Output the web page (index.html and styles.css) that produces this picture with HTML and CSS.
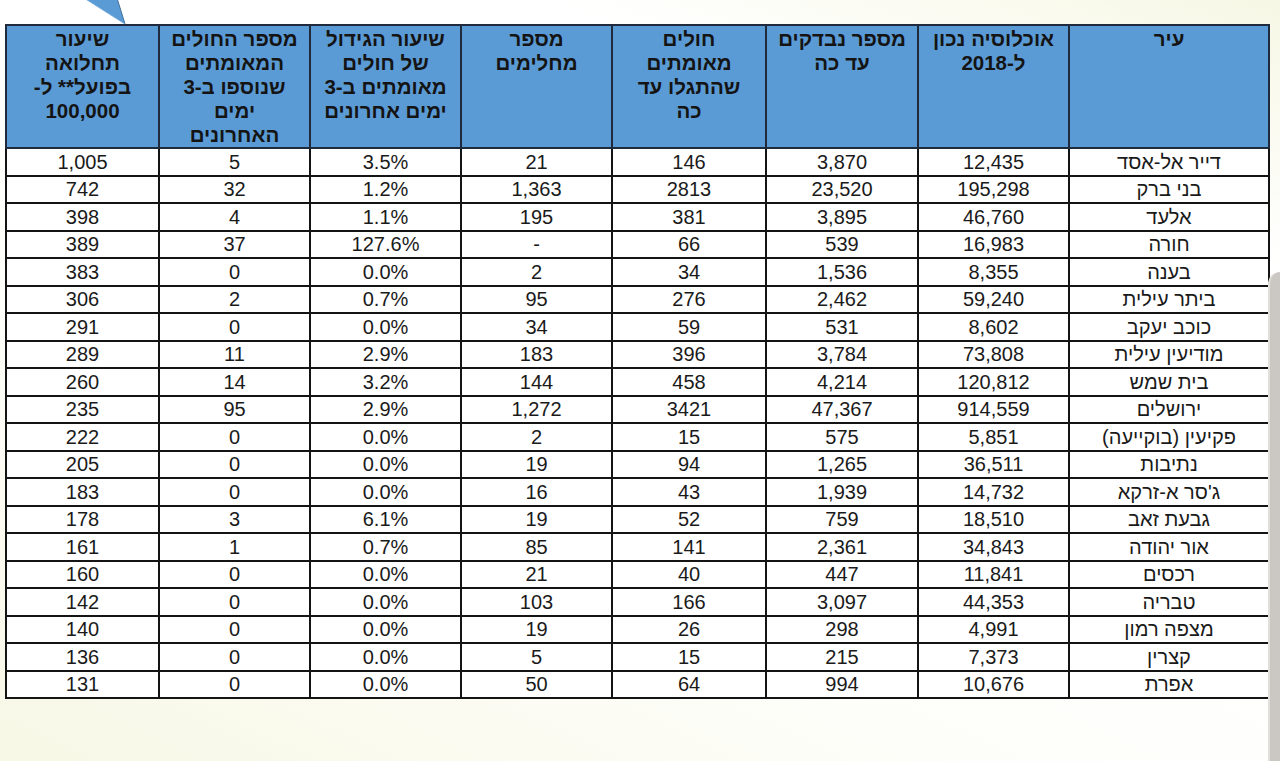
FILE: index.html
```html
<!DOCTYPE html>
<html lang="he">
<head>
<meta charset="utf-8">
<title>שיעור תחלואה</title>
<link rel="stylesheet" href="styles.css">
</head>
<body>
<div class="slide">
  <svg class="callout-tail" width="70" height="30" viewBox="0 0 70 30" aria-hidden="true">
    <polygon points="24,-2 57,-2 65,24" fill="#5b9bd5"/>
    <line x1="57" y1="-2" x2="65" y2="24" stroke="#41719c" stroke-width="1"/>
    <line x1="24" y1="-2" x2="65" y2="24" stroke="#6ea6da" stroke-width="0.8"/>
  </svg>
  <div class="side-panel"></div>
  <table class="data" dir="rtl">
    <colgroup>
      <col class="c-city">
      <col class="c-pop">
      <col class="c-test">
      <col class="c-conf">
      <col class="c-rec">
      <col class="c-grow">
      <col class="c-add">
      <col class="c-rate">
    </colgroup>
    <thead>
      <tr>
        <th>עיר</th>
        <th>אוכלוסיה נכון<br>ל-2018</th>
        <th>מספר נבדקים<br>עד כה</th>
        <th>חולים<br>מאומתים<br>שהתגלו עד<br>כה</th>
        <th>מספר<br>מחלימים</th>
        <th>שיעור הגידול<br>של חולים<br>מאומתים ב-3<br>ימים אחרונים</th>
        <th>מספר החולים<br>המאומתים<br>שנוספו ב-3<br>ימים<br>האחרונים</th>
        <th>שיעור<br>תחלואה<br>בפועל** ל-<br>100,000</th>
      </tr>
    </thead>
    <tbody>
      <tr><td>דייר אל-אסד</td><td>12,435</td><td>3,870</td><td>146</td><td>21</td><td>3.5%</td><td>5</td><td>1,005</td></tr>
      <tr><td>בני ברק</td><td>195,298</td><td>23,520</td><td>2813</td><td>1,363</td><td>1.2%</td><td>32</td><td>742</td></tr>
      <tr><td>אלעד</td><td>46,760</td><td>3,895</td><td>381</td><td>195</td><td>1.1%</td><td>4</td><td>398</td></tr>
      <tr><td>חורה</td><td>16,983</td><td>539</td><td>66</td><td>-</td><td>127.6%</td><td>37</td><td>389</td></tr>
      <tr><td>בענה</td><td>8,355</td><td>1,536</td><td>34</td><td>2</td><td>0.0%</td><td>0</td><td>383</td></tr>
      <tr><td>ביתר עילית</td><td>59,240</td><td>2,462</td><td>276</td><td>95</td><td>0.7%</td><td>2</td><td>306</td></tr>
      <tr><td>כוכב יעקב</td><td>8,602</td><td>531</td><td>59</td><td>34</td><td>0.0%</td><td>0</td><td>291</td></tr>
      <tr><td>מודיעין עילית</td><td>73,808</td><td>3,784</td><td>396</td><td>183</td><td>2.9%</td><td>11</td><td>289</td></tr>
      <tr><td>בית שמש</td><td>120,812</td><td>4,214</td><td>458</td><td>144</td><td>3.2%</td><td>14</td><td>260</td></tr>
      <tr><td>ירושלים</td><td>914,559</td><td>47,367</td><td>3421</td><td>1,272</td><td>2.9%</td><td>95</td><td>235</td></tr>
      <tr><td>פקיעין (בוקייעה)</td><td>5,851</td><td>575</td><td>15</td><td>2</td><td>0.0%</td><td>0</td><td>222</td></tr>
      <tr><td>נתיבות</td><td>36,511</td><td>1,265</td><td>94</td><td>19</td><td>0.0%</td><td>0</td><td>205</td></tr>
      <tr><td>ג'סר א-זרקא</td><td>14,732</td><td>1,939</td><td>43</td><td>16</td><td>0.0%</td><td>0</td><td>183</td></tr>
      <tr><td>גבעת זאב</td><td>18,510</td><td>759</td><td>52</td><td>19</td><td>6.1%</td><td>3</td><td>178</td></tr>
      <tr><td>אור יהודה</td><td>34,843</td><td>2,361</td><td>141</td><td>85</td><td>0.7%</td><td>1</td><td>161</td></tr>
      <tr><td>רכסים</td><td>11,841</td><td>447</td><td>40</td><td>21</td><td>0.0%</td><td>0</td><td>160</td></tr>
      <tr><td>טבריה</td><td>44,353</td><td>3,097</td><td>166</td><td>103</td><td>0.0%</td><td>0</td><td>142</td></tr>
      <tr><td>מצפה רמון</td><td>4,991</td><td>298</td><td>26</td><td>19</td><td>0.0%</td><td>0</td><td>140</td></tr>
      <tr><td>קצרין</td><td>7,373</td><td>215</td><td>15</td><td>5</td><td>0.0%</td><td>0</td><td>136</td></tr>
      <tr><td>אפרת</td><td>10,676</td><td>994</td><td>64</td><td>50</td><td>0.0%</td><td>0</td><td>131</td></tr>
    </tbody>
  </table>
</div>
</body>
</html>
```

FILE: styles.css
```css
html, body {
  margin: 0;
  padding: 0;
}

body {
  width: 1280px;
  height: 761px;
  overflow: hidden;
  font-family: "Liberation Sans", Arial, sans-serif;
  background:
    linear-gradient(200deg, rgba(246, 246, 226, 0.9) 0%, rgba(255, 255, 255, 0) 22%),
    linear-gradient(25deg, rgba(247, 247, 228, 0.95) 0%, rgba(252, 252, 244, 0.6) 30%, rgba(255, 255, 255, 0) 55%),
    #ffffff;
}

.slide {
  position: relative;
  width: 1280px;
  height: 761px;
  padding: 24px 0 0 5px;
  box-sizing: border-box;
}

.callout-tail {
  position: absolute;
  left: 60px;
  top: 0;
}

.side-panel {
  position: absolute;
  right: 0;
  top: 272px;
  width: 10px;
  bottom: 0;
  background: #cbc7c3;
  border-left: 2px solid #e2dfdb;
  border-top-left-radius: 12px;
}

.data {
  border-collapse: collapse;
  table-layout: fixed;
  width: 1263px;
  color: #1b1b1b;
}

.c-city { width: 200px; }
.c-pop { width: 151px; }
.c-test { width: 152px; }
.c-conf { width: 154px; }
.c-rec { width: 151px; }
.c-grow { width: 151px; }
.c-add { width: 151px; }
.c-rate { width: 153px; }

.data th {
  background: #5b9bd5;
  border: 2px solid #1f2a3c;
  height: 118px;
  padding: 1px 2px 0;
  vertical-align: top;
  text-align: center;
  font-weight: bold;
  font-size: 20.5px;
  line-height: 24px;
  color: #141414;
}

.data td {
  background: #ffffff;
  border: 2px solid #141414;
  height: 25.5px;
  padding: 0;
  text-align: center;
  vertical-align: middle;
  font-size: 20px;
  line-height: 22px;
  color: #1a1a1a;
}
```
